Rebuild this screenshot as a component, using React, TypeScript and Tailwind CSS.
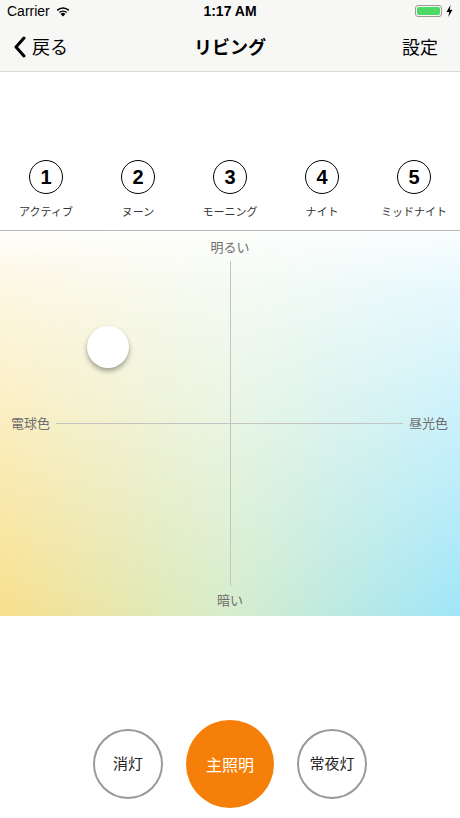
const FONT = '"Noto Sans CJK JP", "Liberation Sans", sans-serif';

const scenes = [
  { n: "1", label: "アクティブ" },
  { n: "2", label: "ヌーン" },
  { n: "3", label: "モーニング" },
  { n: "4", label: "ナイト" },
  { n: "5", label: "ミッドナイト" },
];

function StatusBar() {
  return (
    <div className="h-[22px] flex items-center justify-between px-[7px] text-[14px] text-black">
      <div className="flex items-center gap-[5px] w-[120px]" style={{ fontFamily: '"Liberation Sans", sans-serif' }}>
        <span>Carrier</span>
        <svg width="16" height="12" viewBox="0 0 16 12">
          <path d="M8 11.5 L5.6 8.9 A3.4 3.4 0 0 1 10.4 8.9 Z" fill="black" />
          <path d="M3.9 7.1 A5.8 5.8 0 0 1 12.1 7.1 L11.1 8.1 A4.4 4.4 0 0 0 4.9 8.1 Z" fill="black" />
          <path d="M1.6 4.8 A9 9 0 0 1 14.4 4.8 L13.3 5.9 A7.5 7.5 0 0 0 2.7 5.9 Z" fill="black" />
        </svg>
      </div>
      <span className="font-bold text-[14px]" style={{ fontFamily: '"Liberation Sans", sans-serif' }}>1:17 AM</span>
      <div className="w-[120px] flex justify-end items-center gap-[4px]">
        <div className="w-[27px] h-[12px] rounded-[3px] border border-[#9a9a9a] p-[1px] flex">
          <div className="flex-1 bg-[#4cd964] rounded-[2px]" />
        </div>
        <svg width="7" height="12" viewBox="0 0 7 12">
          <path d="M4.5 0 L0.5 7 H3.2 L2.3 12 L6.5 4.8 H3.8 Z" fill="black" />
        </svg>
      </div>
    </div>
  );
}

function NavBar() {
  return (
    <div className="h-[50px] flex items-center justify-between px-[13px] border-b border-[#d8d8d8]">
      <div className="flex items-center gap-[5px] w-[100px]">
        <svg width="14" height="22" viewBox="0 0 14 22">
          <path d="M11 2 L3 11 L11 20" fill="none" stroke="black" strokeWidth="3" strokeLinecap="round" strokeLinejoin="round" />
        </svg>
        <span className="text-[18px] text-black">戻る</span>
      </div>
      <span className="text-[18px] font-bold text-black">リビング</span>
      <div className="w-[100px] flex justify-end pr-[9px]">
        <span className="text-[18px] text-black">設定</span>
      </div>
    </div>
  );
}

function ScenePicker() {
  return (
    <div className="grid grid-cols-5 pt-[88px] pb-[10px] border-b border-[#b8b8b8]">
      {scenes.map((s) => (
        <div key={s.n} className="flex flex-col items-center">
          <div
            className="w-[34px] h-[34px] rounded-full border-[1.5px] border-black flex items-center justify-center text-[20px] font-bold text-black"
            style={{ fontFamily: '"Liberation Sans", sans-serif' }}
          >
            {s.n}
          </div>
          <span className="mt-[9px] text-[11px] text-[#333]">{s.label}</span>
        </div>
      ))}
    </div>
  );
}

function ColorPad() {
  return (
    <div className="relative h-[385px] bg-[linear-gradient(to_right,#f8e08c,#d6edcc_50%,#9fe6f9)]">
      <div className="absolute inset-0 bg-[linear-gradient(to_bottom,rgba(255,255,255,0.95)_0%,rgba(255,255,255,0.75)_15%,rgba(255,255,255,0)_100%)]" />
      <div className="absolute inset-0 flex flex-col items-center pt-[6px] pb-[6px]">
        <span className="text-[13px] text-[#6f6f6f] leading-[20px]">明るい</span>
        <div className="flex-1 w-full flex items-center">
          <span className="pl-[11px] pr-[6px] text-[13px] text-[#6f6f6f]">電球色</span>
          <div className="flex-1 h-full flex items-center relative">
            <div className="flex-1 h-px bg-[#c4c4c4]" />
            <div className="absolute left-1/2 top-[4px] bottom-[4px] w-px bg-[#c4c4c4]" />
          </div>
          <span className="pl-[6px] pr-[12px] text-[13px] text-[#6f6f6f]">昼光色</span>
        </div>
        <span className="text-[13px] text-[#6f6f6f] leading-[20px]">暗い</span>
      </div>
      <div className="absolute left-[87px] top-[95px] w-[42px] h-[42px] rounded-full bg-white shadow-[0_3px_5px_rgba(0,0,0,0.35)]" />
    </div>
  );
}

function BottomButtons() {
  return (
    <div className="flex items-center justify-center gap-[23px] pt-[104px]">
      <button className="w-[70px] h-[70px] rounded-full border-2 border-[#999] bg-white text-[15px] text-[#222]">消灯</button>
      <button className="w-[88px] h-[88px] rounded-full bg-[#f57f08] text-[16px] text-white">主照明</button>
      <button className="w-[70px] h-[70px] rounded-full border-2 border-[#999] bg-white text-[15px] text-[#222]">常夜灯</button>
    </div>
  );
}

export default function App() {
  return (
    <div className="w-[460px] h-[818px] bg-white flex flex-col overflow-hidden" style={{ fontFamily: FONT }}>
      <div className="bg-[#f7f7f5]">
        <StatusBar />
        <NavBar />
      </div>
      <ScenePicker />
      <ColorPad />
      <BottomButtons />
    </div>
  );
}
